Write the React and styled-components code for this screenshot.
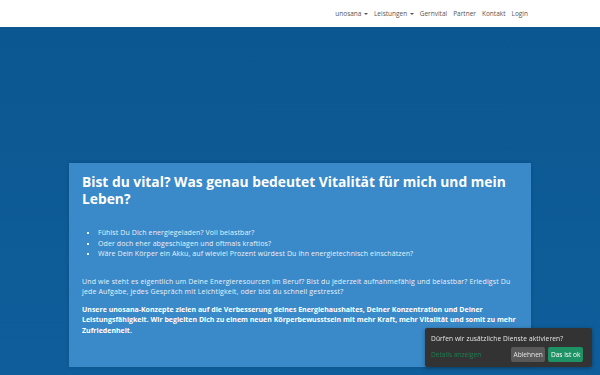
import React from "react";
import styled, { createGlobalStyle } from "styled-components";

const GlobalStyle = createGlobalStyle`
  html, body {
    margin: 0;
    padding: 0;
    height: 100%;
  }
  body {
    font-family: "Open Sans", "DejaVu Sans", sans-serif;
    background: #0f5e9b;
  }
  #root {
    min-height: 100%;
  }
`;

const Page = styled.div`
  min-height: 375px;
  display: flex;
  flex-direction: column;
`;

const Header = styled.header`
  height: 27px;
  background: #ffffff;
  display: flex;
  align-items: center;
`;

const NavInner = styled.nav`
  width: 462px;
  margin: 0 auto;
  display: flex;
  justify-content: flex-end;
  padding-right: 3px;
  box-sizing: border-box;
`;

const NavList = styled.ul`
  list-style: none;
  margin: 0;
  padding: 0;
  display: flex;
  align-items: center;
  gap: 6px;
`;

const NavItem = styled.li`
  display: flex;
  align-items: center;
  line-height: 9px;
`;

const NavLink = styled.a`
  font-size: 6.5px;
  line-height: 9px;
  color: #555;
  text-decoration: none;
  display: inline-flex;
  align-items: center;
  gap: 2.5px;

  &::after {
    content: ${({ $dropdown }) => ($dropdown ? "''" : "none")};
    border-top: 2.5px solid #555;
    border-left: 2px solid transparent;
    border-right: 2px solid transparent;
  }
`;

const Hero = styled.main`
  flex: 1;
  background: linear-gradient(180deg, #0b5791 0%, #0f5e9b 100%);
  padding: 136px 0 9px;
`;

const Card = styled.section`
  width: 462px;
  margin: 0 auto;
  box-sizing: border-box;
  background: #3a89c8;
  padding: 10px 13px 31px;
  color: #ffffff;
  box-shadow: 0 0 4px rgba(0, 0, 0, 0.15);
`;

const Title = styled.h1`
  margin: 0 0 21px;
  font-size: 13.8px;
  line-height: 17px;
  font-weight: 700;
`;

const Bullets = styled.ul`
  margin: 0 0 17px;
  padding-left: 16px;
  list-style: square;
  font-size: 7px;
  line-height: 10.5px;
  letter-spacing: 0.1px;
  color: #e9f2fa;
`;

const Para = styled.p`
  margin: 0 0 7px;
  font-size: 7px;
  line-height: 10.5px;
  font-weight: ${({ $bold }) => ($bold ? 700 : 400)};
  letter-spacing: ${({ $bold }) => ($bold ? "0" : "0.15px")};
  color: ${({ $bold }) => ($bold ? "#ffffff" : "#e9f2fa")};

  &:last-child {
    margin-bottom: 0;
  }
`;

const Consent = styled.div`
  position: fixed;
  right: 8px;
  bottom: 8px;
  width: 167px;
  box-sizing: border-box;
  background: #333333;
  padding: 6px 9px 5px 6px;
  border-radius: 2px;
  box-shadow: 0 1px 4px rgba(0, 0, 0, 0.35);
`;

const ConsentText = styled.p`
  margin: 0 0 4px;
  font-size: 6.6px;
  line-height: 9px;
  letter-spacing: 0.1px;
  color: #e6e6e6;
`;

const ConsentRow = styled.div`
  display: flex;
  align-items: center;
  gap: 3px;
`;

const DetailsLink = styled.a`
  flex: 1;
  font-size: 6.6px;
  color: #1e7f52;
  text-decoration: none;
`;

const ConsentButton = styled.button`
  border: none;
  border-radius: 2px;
  padding: 3px 2.5px;
  font-family: inherit;
  font-size: 6.6px;
  line-height: 9px;
  color: ${({ $accept }) => ($accept ? "#ffffff" : "#e4e4e4")};
  background: ${({ $accept }) => ($accept ? "#1f9265" : "#595959")};
  cursor: pointer;
`;

const navItems = [
  { label: "unosana", dropdown: true },
  { label: "Leistungen", dropdown: true },
  { label: "Gernvital" },
  { label: "Partner" },
  { label: "Kontakt" },
  { label: "Login" },
];

export default function App() {
  return (
    <>
      <GlobalStyle />
      <Page>
        <Header>
          <NavInner>
            <NavList>
              {navItems.map((item) => (
                <NavItem key={item.label}>
                  <NavLink href="#" $dropdown={item.dropdown}>
                    {item.label}
                  </NavLink>
                </NavItem>
              ))}
            </NavList>
          </NavInner>
        </Header>
        <Hero>
          <Card>
            <Title>Bist du vital? Was genau bedeutet Vitalität für mich und mein Leben?</Title>
            <Bullets>
              <li>Fühlst Du Dich energiegeladen? Voll belastbar?</li>
              <li>Oder doch eher abgeschlagen und oftmals kraftlos?</li>
              <li>Wäre Dein Körper ein Akku, auf wieviel Prozent würdest Du ihn energietechnisch einschätzen?</li>
            </Bullets>
            <Para>
              Und wie steht es eigentlich um Deine Energieresourcen im Beruf? Bist du jederzeit
              aufnahmefähig und belastbar? Erledigst Du jede Aufgabe, jedes Gespräch mit Leichtigkeit,
              oder bist du schnell gestresst?
            </Para>
            <Para $bold>
              Unsere unosana-Konzepte zielen auf die Verbesserung deines Energiehaushaltes, Deiner
              Konzentration und Deiner Leistungsfähigkeit. Wir begleiten Dich zu einem neuen
              Körperbewusstsein mit mehr Kraft, mehr Vitalität und somit zu mehr Zufriedenheit.
            </Para>
          </Card>
        </Hero>
      </Page>
      <Consent>
        <ConsentText>Dürfen wir zusätzliche Dienste aktivieren?</ConsentText>
        <ConsentRow>
          <DetailsLink href="#">Details anzeigen</DetailsLink>
          <ConsentButton>Ablehnen</ConsentButton>
          <ConsentButton $accept>Das ist ok</ConsentButton>
        </ConsentRow>
      </Consent>
    </>
  );
}
